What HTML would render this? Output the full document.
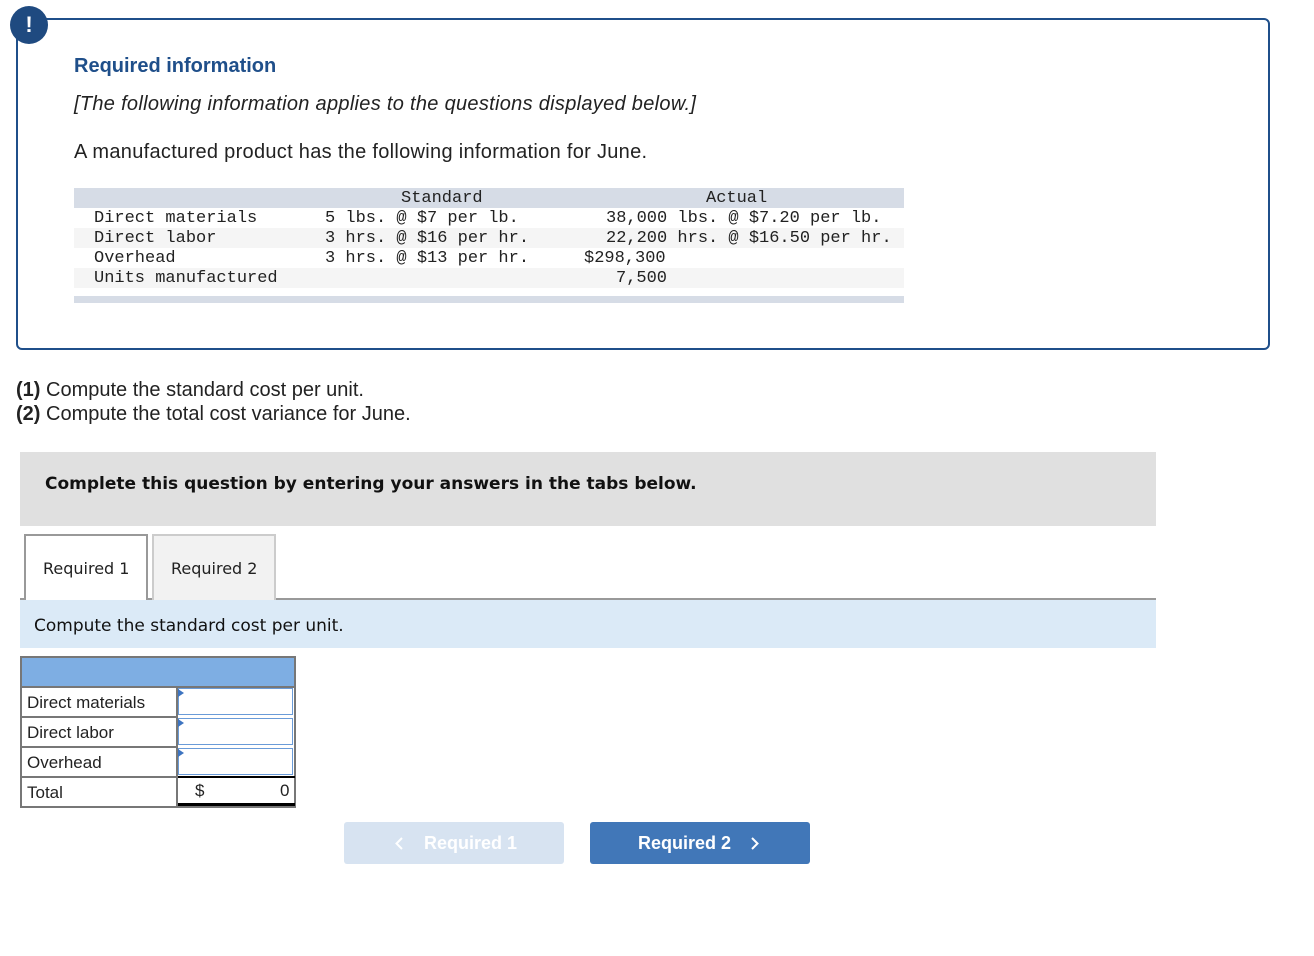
<!DOCTYPE html>
<html><head><style>
body{margin:0;width:1314px;height:956px;background:#fff;position:relative;font-family:"Liberation Sans",sans-serif;color:#222;}
.a{position:absolute;white-space:pre;}
.m{font-family:"Liberation Mono",monospace;font-size:17px;color:#222;}
</style></head><body>
<div class="a" style="left:16px;top:18px;width:1250px;height:328px;border:2px solid #1f4f8a;border-radius:6px;"></div>
<div class="a" style="left:10px;top:6px;width:38px;height:38px;border-radius:50%;background:#1f4a80;color:#fff;font-weight:bold;font-size:22px;text-align:center;line-height:38px;">!</div>
<div class="a" style="left:74px;top:55px;font-size:20px;font-weight:bold;color:#1f4f8a;">Required information</div>
<div class="a" style="left:74px;top:93px;font-size:20px;font-style:italic;letter-spacing:0.3px;">[The following information applies to the questions displayed below.]</div>
<div class="a" style="left:74px;top:141px;font-size:20px;letter-spacing:0.3px;">A manufactured product has the following information for June.</div>
<div class="a" style="left:74px;top:188px;width:830px;height:20px;background:#d6dce6;"></div>
<div class="a" style="left:74px;top:228px;width:830px;height:20px;background:#f5f5f5;"></div>
<div class="a" style="left:74px;top:268px;width:830px;height:20px;background:#f5f5f5;"></div>
<div class="a" style="left:74px;top:296px;width:830px;height:7px;background:#d6dce6;"></div>
<div class="a m" style="left:401px;top:189px;">Standard</div>
<div class="a m" style="left:706px;top:189px;">Actual</div>
<div class="a m" style="left:94px;top:209px;">Direct materials</div>
<div class="a m" style="left:94px;top:229px;">Direct labor</div>
<div class="a m" style="left:94px;top:249px;">Overhead</div>
<div class="a m" style="left:94px;top:269px;">Units manufactured</div>
<div class="a m" style="left:325px;top:209px;">5 lbs. @ $7 per lb.</div>
<div class="a m" style="left:325px;top:229px;">3 hrs. @ $16 per hr.</div>
<div class="a m" style="left:325px;top:249px;">3 hrs. @ $13 per hr.</div>
<div class="a m" style="left:606px;top:209px;">38,000 lbs. @ $7.20 per lb.</div>
<div class="a m" style="left:606px;top:229px;">22,200 hrs. @ $16.50 per hr.</div>
<div class="a m" style="left:584px;top:249px;">$298,300</div>
<div class="a m" style="left:616px;top:269px;">7,500</div>
<div class="a" style="left:16px;top:378px;font-size:20px;line-height:24px;"><b>(1)</b> Compute the standard cost per unit.
<b>(2)</b> Compute the total cost variance for June.</div>
<div class="a" style="left:20px;top:452px;width:1136px;height:74px;background:#e0e0e0;"></div>
<div class="a" style="left:45px;top:474px;font-family:'DejaVu Sans',sans-serif;font-weight:bold;font-size:17px;color:#111;">Complete this question by entering your answers in the tabs below.</div>
<div class="a" style="left:20px;top:598px;width:1136px;height:2px;background:#999;"></div>
<div class="a" style="left:24px;top:534px;width:120px;height:66px;border:2px solid #999;border-bottom:none;background:#fff;"></div>
<div class="a" style="left:152px;top:534px;width:120px;height:64px;border:2px solid #ccc;border-bottom:none;background:#f2f2f2;"></div>
<div class="a" style="left:43px;top:559px;font-family:'DejaVu Sans',sans-serif;font-size:16px;">Required 1</div>
<div class="a" style="left:171px;top:559px;font-family:'DejaVu Sans',sans-serif;font-size:16px;">Required 2</div>
<div class="a" style="left:20px;top:600px;width:1136px;height:48px;background:#dbeaf7;"></div>
<div class="a" style="left:34px;top:616px;font-family:'DejaVu Sans',sans-serif;font-size:17px;color:#111;">Compute the standard cost per unit.</div>
<div class="a" style="left:20px;top:656px;width:272px;height:148px;border:2px solid #777;background:#fff;"></div>
<div class="a" style="left:22px;top:658px;width:272px;height:28px;background:#7eaee3;"></div>
<div class="a" style="left:22px;top:686px;width:272px;height:2px;background:#777;"></div>
<div class="a" style="left:22px;top:716px;width:155px;height:2px;background:#777;"></div>
<div class="a" style="left:22px;top:746px;width:155px;height:2px;background:#777;"></div>
<div class="a" style="left:22px;top:776px;width:155px;height:2px;background:#777;"></div>
<div class="a" style="left:176px;top:688px;width:2px;height:118px;background:#777;"></div>
<div class="a" style="left:178px;top:688px;width:113px;height:25px;border:1.5px solid #6a9bd8;"></div>
<div class="a" style="left:178px;top:718px;width:113px;height:25px;border:1.5px solid #6a9bd8;"></div>
<div class="a" style="left:178px;top:748px;width:113px;height:25px;border:1.5px solid #6a9bd8;"></div>
<div class="a" style="left:178px;top:689px;width:0;height:0;border-left:6px solid #3d74c0;border-top:4px solid transparent;border-bottom:4px solid transparent;"></div>
<div class="a" style="left:178px;top:719px;width:0;height:0;border-left:6px solid #3d74c0;border-top:4px solid transparent;border-bottom:4px solid transparent;"></div>
<div class="a" style="left:178px;top:749px;width:0;height:0;border-left:6px solid #3d74c0;border-top:4px solid transparent;border-bottom:4px solid transparent;"></div>
<div class="a" style="left:178px;top:776px;width:117px;height:2px;background:#000;"></div>
<div class="a" style="left:178px;top:803px;width:117px;height:3px;background:#000;"></div>
<div class="a" style="left:27px;top:693px;font-size:17px;">Direct materials</div>
<div class="a" style="left:27px;top:723px;font-size:17px;">Direct labor</div>
<div class="a" style="left:27px;top:753px;font-size:17px;">Overhead</div>
<div class="a" style="left:27px;top:783px;font-size:17px;">Total</div>
<div class="a" style="left:195px;top:781px;font-size:17px;">$</div>
<div class="a" style="left:280px;top:781px;font-size:17px;">0</div>
<div class="a" style="left:344px;top:822px;width:220px;height:42px;background:#d7e3f1;border-radius:3px;color:#fff;font-weight:bold;font-size:18px;line-height:42px;"><svg style="position:absolute;left:51px;top:15px" width="8" height="13"><path d="M7 1L1.5 6.5L7 12" stroke="#fff" stroke-width="2" fill="none"/></svg><span style="position:absolute;left:80px;">Required 1</span></div>
<div class="a" style="left:590px;top:822px;width:220px;height:42px;background:#4177b8;border-radius:3px;color:#fff;font-weight:bold;font-size:18px;line-height:42px;"><span style="position:absolute;left:48px;">Required 2</span><svg style="position:absolute;left:161px;top:15px" width="8" height="13"><path d="M1 1L6.5 6.5L1 12" stroke="#fff" stroke-width="2" fill="none"/></svg></div>
</body></html>
